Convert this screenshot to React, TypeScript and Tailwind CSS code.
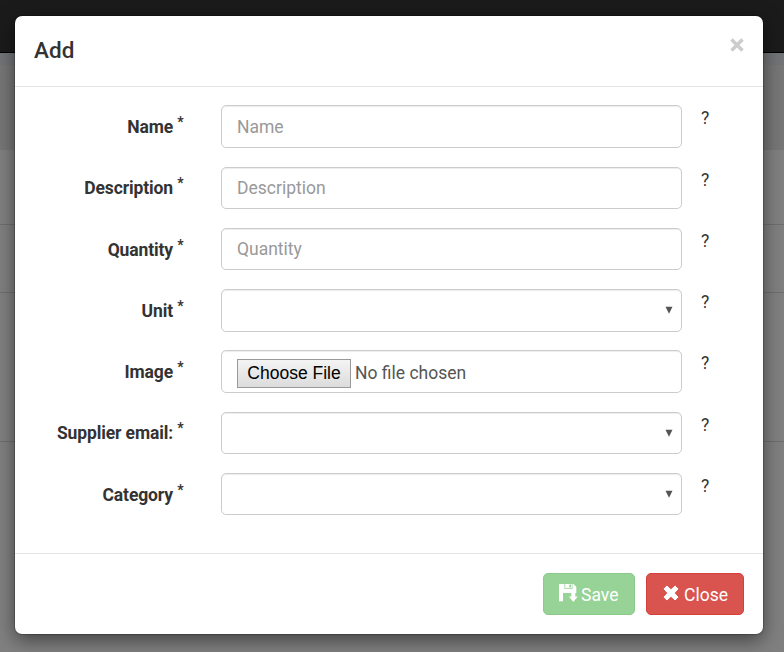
import React from "react";

type Kind = "text" | "select" | "file";

const fields: { label: string; kind: Kind; placeholder?: string }[] = [
  { label: "Name", kind: "text", placeholder: "Name" },
  { label: "Description", kind: "text", placeholder: "Description" },
  { label: "Quantity", kind: "text", placeholder: "Quantity" },
  { label: "Unit", kind: "select" },
  { label: "Image", kind: "file" },
  { label: "Supplier email:", kind: "select" },
  { label: "Category", kind: "select" },
];

const controlClass =
  "flex h-[42.5px] w-[461px] items-center rounded-[5px] border border-[#ccc] bg-white px-[15px] text-[#555] shadow-[inset_0_1px_1px_rgba(0,0,0,0.075)]";

function Control({ kind, placeholder }: { kind: Kind; placeholder?: string }) {
  if (kind === "text") {
    return <input type="text" placeholder={placeholder} className={`${controlClass} outline-none placeholder:text-[#999]`} />;
  }
  if (kind === "select") {
    return (
      <div className={`${controlClass} justify-end pr-[8px]!`}>
        <svg width="8" height="8" viewBox="0 0 8 8" fill="#555">
          <path d="M.5 .8h7L4 7.8z" />
        </svg>
      </div>
    );
  }
  return (
    <div className={controlClass}>
      <button className="mt-[3px] h-[29px] w-[114px] border border-[#999] bg-linear-to-b from-[#f4f4f4] to-[#dcdcdc] font-['Liberation_Sans',Arial,sans-serif] text-black">
        Choose File
      </button>
      <span className="ml-[4px] mt-[3px]">No file chosen</span>
    </div>
  );
}

function SaveIcon() {
  return (
    <svg width="19" height="18" viewBox="0 0 19 18" fill="currentColor" className="relative top-[-1px]">
      <path
        fillRule="evenodd"
        d="M0 0H5.500V5H13.500V0H14.500L17.300 2.800V9H16.300V12.500H18.700L14.400 18 9.800 12.500H12.300V9H4V17.200H0z"
      />
      <path fillRule="evenodd" d="M6.300 0H12.800V4.200H6.300zM10.300 .6V3.600H12V.6z" />
    </svg>
  );
}

function CrossIcon() {
  return (
    <svg width="16" height="16" viewBox="0 0 16 16" fill="currentColor" className="relative top-[-1px]">
      <path
        d="M3.900 1 8 4.800 12.100 1 15 3.900 11.200 8 15 12.100 12.100 15 8 11.200 3.900 15 1 12.100 4.800 8 1 3.900z"
        stroke="currentColor"
        strokeWidth="1"
        strokeLinejoin="round"
      />
    </svg>
  );
}

export default function App() {
  return (
    <div className="relative h-[652px] w-[784px] overflow-hidden bg-[#808080] font-['Roboto','Liberation_Sans',sans-serif] text-[17.5px] leading-[25px] text-[#333]">
      <div className="h-[53px] border-b border-black bg-[#1b1b1b]" />
      <div className="h-[12px] bg-[#727477]" />
      <div className="h-[85px] bg-[#777]" />
      <div className="h-[75px] border-b border-[#6f6f6f]" />
      <div className="h-[68px] border-b border-[#6f6f6f]" />
      <div className="h-[149px] border-b border-[#6f6f6f]" />

      <div className="absolute left-[15px] top-[16px] flex h-[618px] w-[748px] flex-col rounded-[7px] bg-white shadow-[0_0_0_1px_rgba(0,0,0,0.2),0_6px_19px_rgba(0,0,0,0.5)]">
        <header className="flex h-[71px] shrink-0 items-start justify-between border-b border-[#e5e5e5] pl-[19px] pr-[19px] pt-[18px]">
          <h4 className="text-[22.5px] font-medium leading-[32px] tracking-[0.1px]">Add</h4>
          <button aria-label="Close" className="mt-[4px] text-[#ccc]">
            <svg width="14" height="14" viewBox="0 0 14 14" stroke="currentColor" strokeWidth="3.5">
              <path d="m1.500 1.500 11 11m0-11-11 11" />
            </svg>
          </button>
        </header>

        <div className="flex h-[466px] shrink-0 flex-col gap-[18.75px] pt-[18.25px]">
          {fields.map((f) => (
            <div key={f.label} className="flex h-[42.5px]">
              <label className="w-[168.500px] pt-[9.75px] text-right font-bold tracking-[-0.12px]">
                {f.label} <sup className="relative top-[-6px] align-baseline text-[14px] leading-none">*</sup>
              </label>
              <div className="ml-[37.5px]">
                <Control kind={f.kind} placeholder={f.placeholder} />
              </div>
              <span className="ml-[19px] pt-px">?</span>
            </div>
          ))}
        </div>

        <footer className="flex h-[81px] gap-[11px] justify-end border-t border-[#e5e5e5] pr-[19px] pt-[19px]">
          <button className="flex h-[42px] w-[92px] items-center rounded-[5px] border border-[#8aca8a] bg-[#97d297] pl-[15px] text-white">
            <SaveIcon />
            <span className="ml-[3px] mt-[2px]">Save</span>
          </button>
          <button className="flex h-[42px] w-[98px] items-center rounded-[5px] border border-[#d43f3a] bg-[#d9534f] pl-[16px] text-white">
            <CrossIcon />
            <span className="ml-[5px] mt-[2px]">Close</span>
          </button>
        </footer>
      </div>
    </div>
  );
}
